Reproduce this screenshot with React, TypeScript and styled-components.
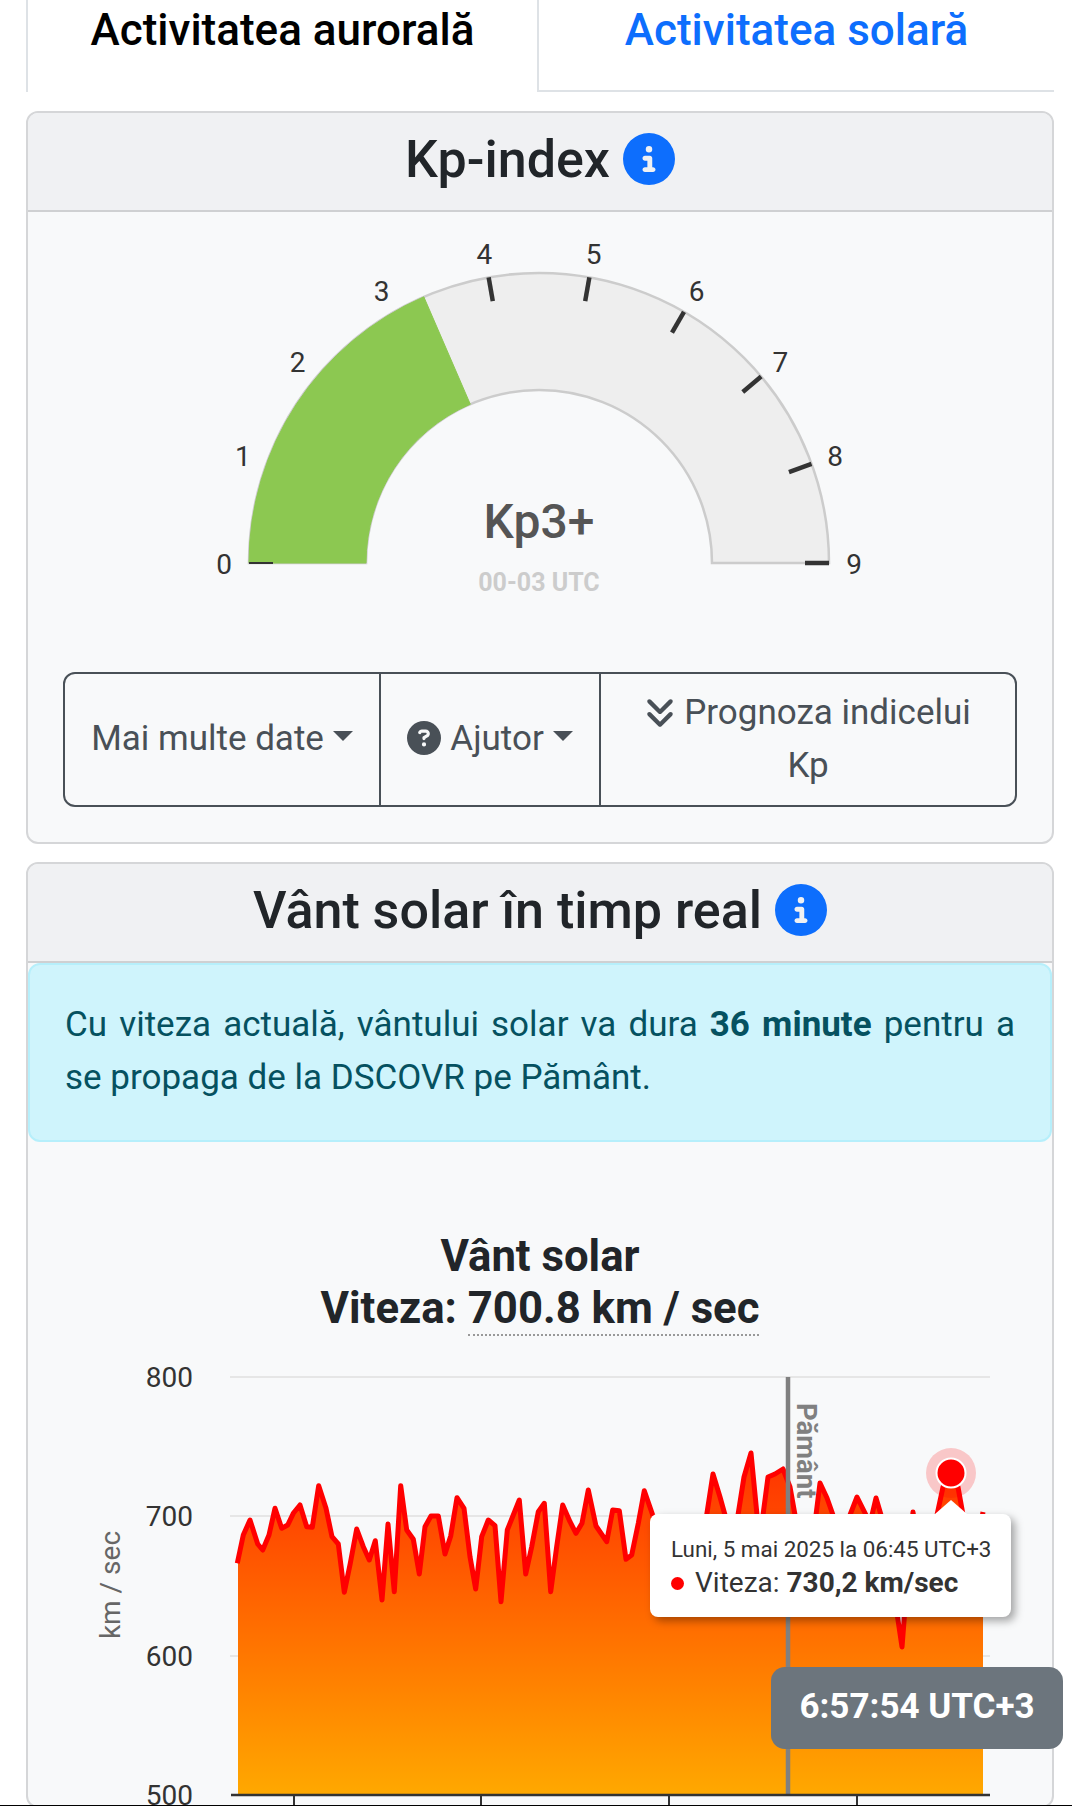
import React from "react";
import styled, { createGlobalStyle } from "styled-components";
import { FaAnglesDown, FaCircleInfo, FaCircleQuestion } from "react-icons/fa6";

const GlobalStyle = createGlobalStyle`
  html, body {
    margin: 0;
    height: 1806px;
    overflow: hidden;
    background: #fff;
    font-family: Roboto, "Liberation Sans", sans-serif;
    color: #212529;
  }
  * { box-sizing: border-box; }
`;

const Page = styled.div`
  position: relative;
  height: 1806px;
  padding: 0 18px 0 26px;
  overflow: hidden;
`;

const Tabs = styled.div`
  display: flex;
  height: 92px;
  border-bottom: 2px solid #dee2e6;
`;

const Tab = styled.div<{ $active?: boolean }>`
  flex: ${(p) => (p.$active ? "0 0 513px" : "1")};
  height: ${(p) => (p.$active ? "92px" : "90px")};
  text-align: center;
  font-size: 44px;
  font-weight: 500;
  line-height: 60px;
  color: ${(p) => (p.$active ? "#000" : "#0d6efd")};
  background: #fff;
  border-left: ${(p) => (p.$active ? "2px solid #dee2e6" : "none")};
  border-right: ${(p) => (p.$active ? "2px solid #dee2e6" : "none")};
`;

const Card = styled.section<{ $top: number }>`
  margin-top: ${(p) => p.$top}px;
  background: #f8f9fa;
  border: 2px solid #d5d6d8;
  border-radius: 12px;
`;

const CardHeader = styled.header`
  display: flex;
  align-items: center;
  justify-content: center;
  gap: 13px;
  height: 99px;
  padding-bottom: 3px;
  background: #f0f1f3;
  border-bottom: 2px solid #cfd0d2;
  border-radius: 10px 10px 0 0;
`;

const CardTitle = styled.h2`
  margin: 0;
  font-size: 52px;
  font-weight: 500;
  line-height: 1.2;
  color: #212529;
`;

const InfoIcon = styled(FaCircleInfo)`
  width: 52px;
  height: 52px;
  margin-bottom: 2px;
  color: #0d6efd;
`;

const Drawing = styled.svg`
  display: block;
  font-family: Roboto, "Liberation Sans", sans-serif;
`;

const ButtonGroup = styled.div`
  display: grid;
  grid-template-columns: 314px 220px 1fr;
  height: 135px;
  margin: 0 35px 35px;
  border: 2px solid #495057;
  border-radius: 12px;
`;

const GroupButton = styled.div<{ $nowrap?: boolean }>`
  display: flex;
  align-items: center;
  justify-content: center;
  padding: 0 ${(p) => (p.$nowrap ? "0" : "26px")} 2px;
  font-size: 35px;
  line-height: 53px;
  color: #495057;
  text-align: center;
  white-space: ${(p) => (p.$nowrap ? "nowrap" : "normal")};
  & + & {
    border-left: 2px solid #495057;
  }
`;

const Caret = styled.span`
  display: inline-block;
  margin-left: 0.255em;
  vertical-align: 0.255em;
  border-top: 0.3em solid;
  border-right: 0.3em solid transparent;
  border-left: 0.3em solid transparent;
`;

const HelpIcon = styled(FaCircleQuestion)`
  width: 34px;
  height: 34px;
  margin-right: 9px;
  vertical-align: -5px;
`;

const ForecastIcon = styled(FaAnglesDown)`
  width: 30px;
  height: 34px;
  margin-right: 9px;
  vertical-align: -5px;
`;

const Alert = styled.div`
  height: 179px;
  padding: 34px 35px 0;
  background: #cff4fc;
  border: 2px solid #b6effb;
  border-radius: 12px;
  font-size: 35px;
  line-height: 52.5px;
  color: #055160;
  text-align: justify;
  strong {
    font-weight: 700;
  }
`;

const ChartTitle = styled.div`
  padding-top: 88px;
  text-align: center;
  font-size: 43.7px;
  font-weight: 700;
  line-height: 52px;
  color: #212529;
`;

const DottedValue = styled.span`
  border-bottom: 2px dotted #999;
`;

const ChartArea = styled.div`
  position: relative;
  margin-top: 6px;
`;

const ChartTooltip = styled.div`
  position: absolute;
  left: 622px;
  top: 174px;
  width: 361px;
  height: 103px;
  padding: 18px 0 0 21px;
  background: #fff;
  border-radius: 8px;
  box-shadow: 4px 4px 8px rgba(0, 0, 0, 0.35);
  color: #333;
  &::after {
    content: "";
    position: absolute;
    left: 285px;
    top: -14px;
    border-right: 16px solid transparent;
    border-left: 16px solid transparent;
    border-bottom: 14px solid #fff;
  }
`;

const TooltipDate = styled.div`
  font-size: 22.4px;
  line-height: 34px;
`;

const TooltipValue = styled.div`
  font-size: 28px;
  line-height: 34px;
  strong {
    font-weight: 700;
  }
`;

const Bullet = styled.span`
  display: inline-block;
  width: 13px;
  height: 13px;
  margin-right: 11px;
  vertical-align: 2px;
  border-radius: 50%;
  background: #f00;
`;

const Clock = styled.div`
  position: absolute;
  left: 771px;
  top: 1667px;
  width: 292px;
  height: 82px;
  border-radius: 14px;
  background: #6c757d;
  color: #fff;
  font-size: 35px;
  font-weight: 700;
  line-height: 80px;
  text-align: center;
`;

const ScreenEdge = styled.div`
  position: absolute;
  left: 0;
  right: 0;
  bottom: 0;
  height: 1px;
  background: #000;
`;

const CX = 539;
const CY = 563;
const R_OUT = 290;
const R_IN = 173;

const polar = (r: number, kp: number) => {
  const a = (Math.PI * kp) / 9;
  return [CX - r * Math.cos(a), CY - r * Math.sin(a)];
};

const band = (from: number, to: number) => {
  const [x1, y1] = polar(R_OUT, from);
  const [x2, y2] = polar(R_OUT, to);
  const [x3, y3] = polar(R_IN, to);
  const [x4, y4] = polar(R_IN, from);
  return `M${x1} ${y1}A${R_OUT} ${R_OUT} 0 0 1 ${x2} ${y2}L${x3} ${y3}A${R_IN} ${R_IN} 0 0 0 ${x4} ${y4}Z`;
};

const Gauge: React.FC = () => (
  <Drawing width="1024" height="460" viewBox="28 212 1024 460">
    <path d={band(0, 9)} fill="#eeeeee" stroke="#cccccc" strokeWidth="2.5" />
    <path d={band(0, 3.33)} fill="#8cc851" stroke="#8cc851" strokeWidth="1" />
    {[0, 1, 2, 3, 4, 5, 6, 7, 8, 9].map((k) => {
      const [x1, y1] = polar(R_OUT, k);
      const [x2, y2] = polar(R_OUT - 24, k);
      const [lx, ly] = polar(315, k);
      const hidden = k > 0 && k < 4;
      return (
        <g key={k}>
          {!hidden && (
            <line
              x1={x1}
              y1={y1}
              x2={x2}
              y2={y2}
              stroke="#333"
              strokeWidth={k === 0 ? 2 : 4.5}
            />
          )}
          <text x={lx} y={ly + 11} textAnchor="middle" fontSize="28" fill="#333">
            {k}
          </text>
        </g>
      );
    })}
    <text x={CX} y="538" textAnchor="middle" fontSize="48" fontWeight="500" fill="#555">
      Kp3+
    </text>
    <text x={CX} y="591" textAnchor="middle" fontSize="25" fontWeight="700" fill="#ccc">
      00-03 UTC
    </text>
  </Drawing>
);

const fromCrop = (ox: number, pts: number[][]) =>
  pts.map(([x, y]) => [ox + x / 3, 1420 + y / 3]);

const speed: number[][] = [
  ...fromCrop(230, [
    [22, 430], [40, 345], [60, 300], [83, 372], [98, 390], [117, 345], [135, 265], [155, 325],
    [173, 315], [190, 280], [210, 255], [230, 320], [247, 322], [266, 197], [288, 265], [306, 350],
    [325, 372], [343, 517], [361, 430], [380, 327], [400, 380], [418, 420], [436, 362], [456, 540],
    [474, 312], [493, 515], [512, 197], [530, 330], [550, 358], [568, 462], [585, 320], [603, 288],
    [625, 288], [645, 402], [662, 348], [681, 233], [702, 265], [720, 410], [737, 507], [755, 350],
    [775, 300], [795, 317],
  ]),
  ...fromCrop(490, [
    [33, 545], [52, 330], [70, 285], [88, 240], [107, 462], [125, 380], [145, 275], [163, 250],
    [182, 515], [200, 380], [218, 255], [240, 305], [258, 340], [276, 310], [295, 210], [318, 318],
    [350, 365], [368, 270], [388, 272], [408, 418], [425, 405], [445, 310], [463, 212], [488, 285],
  ]),
  [660, 1550], [672, 1590], [685, 1560], [695, 1540], [706.7, 1515], [713, 1474], [720, 1497],
  [725, 1515], [732, 1590], [738, 1515], [744, 1477], [751, 1453], [757, 1515], [760, 1540],
  [763, 1515], [768, 1477], [775, 1474], [783, 1469], [790, 1487], [795, 1515], [802, 1570],
  [808, 1600], [814, 1560], [816, 1515], [820, 1483], [827, 1498], [833, 1515], [840, 1570],
  [846, 1560], [850, 1515], [857, 1497], [866, 1515], [870, 1550], [872, 1515], [876, 1498],
  [881, 1515], [888, 1560], [895, 1600], [902, 1647], [908, 1570], [913, 1512], [920, 1560],
  [930, 1560], [937, 1515], [943, 1487], [951, 1474], [958, 1487], [963, 1515], [970, 1560],
  [978, 1540], [983, 1512],
];

const linePath = speed.map(([x, y], i) => `${i ? "L" : "M"}${x.toFixed(1)} ${y.toFixed(1)}`).join("");
const areaPath = `${linePath}L983 1794L238 1794L238 ${speed[0][1]}Z`;

const yTicks: [string, number][] = [
  ["800", 1377],
  ["700", 1516],
  ["600", 1656],
  ["500", 1795],
];

const SpeedChart: React.FC = () => (
  <Drawing width="1024" height="466" viewBox="28 1340 1024 466">
    <defs>
      <linearGradient id="speedFill" gradientUnits="userSpaceOnUse" x1="0" y1="1450" x2="0" y2="1794">
        <stop offset="0" stopColor="#ff3000" />
        <stop offset="1" stopColor="#ffa800" />
      </linearGradient>
    </defs>
    {yTicks.slice(0, 3).map(([label, y]) => (
      <line key={label} x1="230" x2="990" y1={y} y2={y} stroke="#e6e6e6" strokeWidth="2" />
    ))}
    <path d={areaPath} fill="url(#speedFill)" />
    <path d={linePath} fill="none" stroke="#ff0000" strokeWidth="5" strokeLinejoin="round" />
    <line x1="788" x2="788" y1="1377" y2="1794" stroke="#808080" strokeWidth="4.5" />
    <text
      transform="translate(797 1403) rotate(90)"
      fontSize="27.5"
      fontWeight="700"
      fill="#808080"
    >
      Pământ
    </text>
    <line x1="231" x2="990" y1="1795" y2="1795" stroke="#333" strokeWidth="2.5" />
    {[294, 481, 669, 857].map((x) => (
      <line key={x} x1={x} x2={x} y1="1795" y2="1806" stroke="#333" strokeWidth="2" />
    ))}
    {yTicks.map(([label, y]) => (
      <text key={label} x="193" y={y + 10} textAnchor="end" fontSize="28" fill="#333">
        {label}
      </text>
    ))}
    <text
      transform="translate(120 1585) rotate(-90)"
      textAnchor="middle"
      fontSize="28"
      fill="#666"
    >
      km / sec
    </text>
    <circle cx="951" cy="1473" r="25" fill="#ff0000" opacity="0.2" />
    <circle cx="951" cy="1473" r="14.5" fill="#ff0000" stroke="#fff" strokeWidth="2" />
  </Drawing>
);

const App: React.FC = () => {
  return (
    <Page>
      <GlobalStyle />
      <Tabs>
        <Tab $active>Activitatea aurorală</Tab>
        <Tab>Activitatea solară</Tab>
      </Tabs>

      <Card $top={19}>
        <CardHeader>
          <CardTitle>Kp-index</CardTitle>
          <InfoIcon />
        </CardHeader>
        <Gauge />
        <ButtonGroup>
          <GroupButton>
            <span>
              Mai multe date
              <Caret />
            </span>
          </GroupButton>
          <GroupButton $nowrap>
            <span>
              <HelpIcon />
              Ajutor
              <Caret />
            </span>
          </GroupButton>
          <GroupButton>
            <span>
              <ForecastIcon />
              Prognoza indicelui Kp
            </span>
          </GroupButton>
        </ButtonGroup>
      </Card>

      <Card $top={18}>
        <CardHeader>
          <CardTitle>Vânt solar în timp real</CardTitle>
          <InfoIcon />
        </CardHeader>
        <Alert>
          Cu viteza actuală, vântului solar va dura <strong>36 minute</strong> pentru a se propaga
          de la DSCOVR pe Pământ.
        </Alert>
        <ChartTitle>
          Vânt solar
          <br />
          Viteza: <DottedValue>700.8 km / sec</DottedValue>
        </ChartTitle>
        <ChartArea>
          <SpeedChart />
          <ChartTooltip>
            <TooltipDate>Luni, 5 mai 2025 la 06:45 UTC+3</TooltipDate>
            <TooltipValue>
              <Bullet />
              Viteza: <strong>730,2 km/sec</strong>
            </TooltipValue>
          </ChartTooltip>
        </ChartArea>
      </Card>

      <Clock>6:57:54 UTC+3</Clock>
      <ScreenEdge />
    </Page>
  );
};

export default App;
